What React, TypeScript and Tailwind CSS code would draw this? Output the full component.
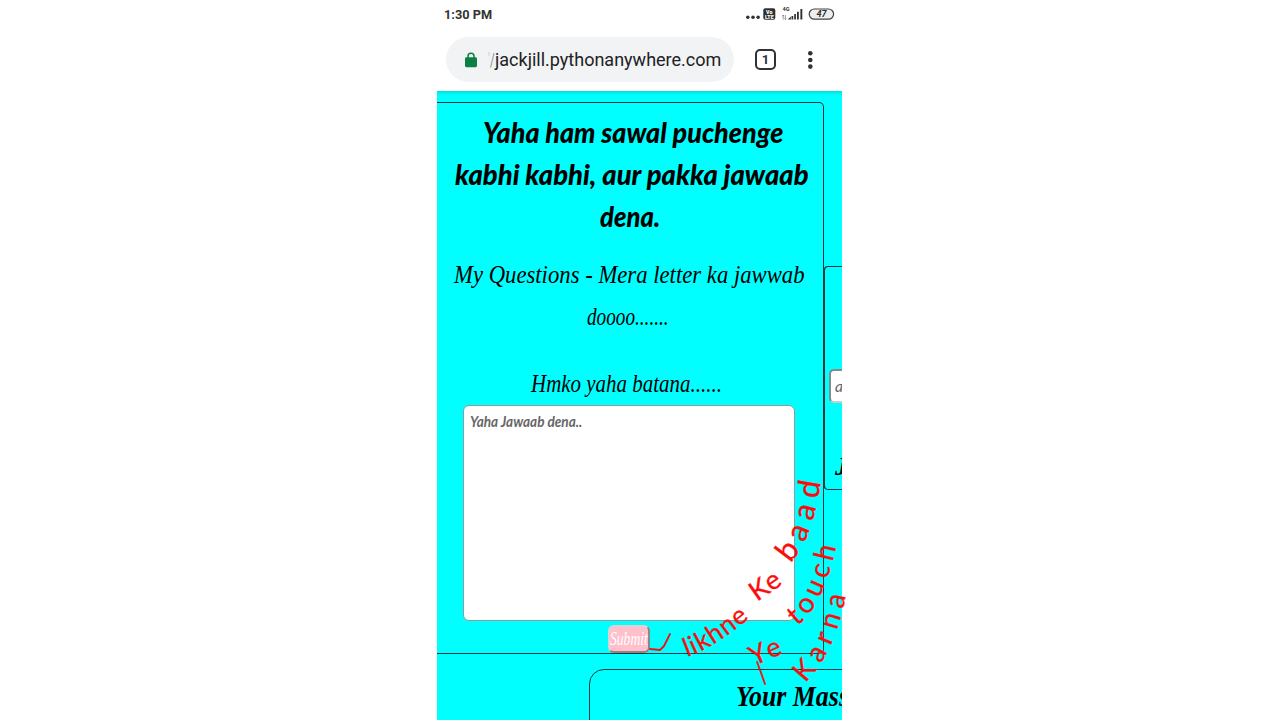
import { useLayoutEffect, useRef, type ReactNode } from "react";

/* A single line of text condensed or widened to a given width. */
function Line({ width, className = "", children }: { width: number; className?: string; children: ReactNode }) {
  const ref = useRef<HTMLSpanElement>(null);
  useLayoutEffect(() => {
    const el = ref.current;
    if (el) el.style.transform = `scaleX(${width / el.offsetWidth})`;
  }, [width]);
  return (
    <span className={`block shrink-0 ${className}`} style={{ width }}>
      <span ref={ref} className="inline-block origin-left whitespace-nowrap">
        {children}
      </span>
    </span>
  );
}

const brush = "font-['Lato','Liberation_Sans',sans-serif] font-black italic";
const script = "font-['Liberation_Serif',serif] italic";

function StatusBar() {
  return (
    <div className="flex h-[29px] items-start justify-between pr-[6px] pl-[7px] text-[#333]">
      <Line width={48} className="text-[13px] leading-[29px] font-bold">1:30 PM</Line>
      <svg width="90" height="18" viewBox="0 0 90 18" fill="#303030" className="mt-[5px]">
        <circle cx="1.8" cy="12.3" r="1.75" />
        <circle cx="7" cy="12.3" r="1.75" />
        <circle cx="12.1" cy="12.3" r="1.75" />
        <rect x="17.3" y="3.2" width="12" height="11.6" rx="2" />
        <text x="23.3" y="8.7" fill="#fff" fontSize="5.3" fontWeight="900" textAnchor="middle">Vo</text>
        <text x="23.3" y="13.6" fill="#fff" fontSize="5.3" fontWeight="900" textAnchor="middle">LTE</text>
        <text x="36.5" y="6" fontSize="5.6" fontWeight="700">4G</text>
        <path d="M37.2 10v4.5M36.4 11.2l.8-1.2.8 1.2M39.4 10v4.5M38.6 13.3l.8 1.2.8-1.2" stroke="#777" strokeWidth=".7" fill="none" />
        <path d="M41.8 14.6l3-3v3zM45.5 11h1.7v3.6h-1.7zM48.2 9h1.7v5.6h-1.7zM51 6.7h1.8v7.9H51zM54.4 4h1.9v10.6h-1.9z" />
        <rect x="63.2" y="4" width="24.4" height="10.2" rx="5.1" fill="#eee" stroke="#444" strokeWidth="1.2" />
        <text x="75.5" y="12.3" fontSize="9" fontWeight="700" fontStyle="italic" textAnchor="middle">47</text>
      </svg>
    </div>
  );
}

function AddressBar() {
  return (
    <div className="flex h-[62px] items-start pt-[8px] pl-[9px]">
      <div className="flex h-[45px] w-[288px] items-center rounded-full bg-[#f1f3f4] pl-[19px]">
        <svg width="12" height="16" viewBox="0 0 12 16" className="mr-[11px]">
          <path d="M3 7V4.2a3 3 0 0 1 6 0V7" fill="none" stroke="#0b8043" strokeWidth="1.5" />
          <rect x="0" y="5.2" width="12" height="10" rx="1.4" fill="#0b8043" />
        </svg>
        <span className="flex pt-px text-[18px] leading-[44px] text-[#202124]">
          <Line width={7} className="text-[#8b8d8f]"><span className="text-[#c8cacc]">'</span>/</Line>
          <Line width={226}>jackjill.pythonanywhere.com</Line>
        </span>
      </div>
      <div className="mt-[12px] ml-[21px] flex h-[21px] w-[21px] items-center justify-center rounded-[5px] border-2 border-[#2f3235] text-[13px] font-bold text-[#2f3235]">
        1
      </div>
      <svg width="6" height="20" viewBox="0 0 6 20" fill="#303336" className="mt-[13px] ml-[31px]">
        <circle cx="3.3" cy="3.2" r="2.3" />
        <circle cx="3.3" cy="10" r="2.3" />
        <circle cx="3.3" cy="16.6" r="2.3" />
      </svg>
    </div>
  );
}

function QuestionCard() {
  return (
    <section className="flex h-[552px] w-[387px] shrink-0 flex-col rounded-r-[5px] border border-l-0 border-[#12393b] text-black">
      <h1 className={`mt-[8px] text-[29px] leading-[42px] ${brush}`}>
        <Line width={300} className="ml-[46px]">Yaha ham sawal puchenge</Line>
        <Line width={354} className="ml-[18px]">kabhi kabhi, aur pakka jawaab</Line>
        <Line width={60} className="ml-[163px]">dena.</Line>
      </h1>
      <div className={`mt-[17px] text-[26px] leading-[42px] ${script}`}>
        <Line width={351} className="ml-[17px]">My Questions - Mera letter ka jawwab</Line>
        <Line width={82} className="ml-[150px]">doooo.......</Line>
        <Line width={191} className="mt-[25px] ml-[94px]">Hmko yaha batana......</Line>
      </div>
      <div className="ml-[26px] h-[216px] w-[332px] shrink-0 rounded-[6px] border border-[#8b9c9d] bg-white pt-[5px] pl-[6px] text-[15px] leading-[20px] text-[#666] italic">
        <Line width={112} className="font-['Lato',sans-serif] font-bold">Yaha Jawaab dena..</Line>
      </div>
      <button className={`mt-[4px] ml-[171px] h-[28px] w-[42px] shrink-0 rounded-[6px] border-2 border-t-[#e3cfd3] border-r-[#8d8588] border-b-[#8d8588] border-l-[#e3cfd3] bg-[#ffc0cb] text-left text-[19px] leading-[22px] text-white ${script}`}>
        <Line width={38}>Submit</Line>
      </button>
    </section>
  );
}

function SideCard() {
  return (
    <section className="mt-[164px] -ml-px flex h-[224px] w-[160px] shrink-0 flex-col rounded-[5px] border border-l-2 border-[#12393b]">
      <div className="mt-[102px] ml-[4px] h-[34px] w-[140px] rounded-[5px] border-2 border-[#858b8c] border-r-[#ccc] border-b-[#ccc] bg-white pl-[4px] text-[15px] leading-[30px] text-[#666] italic">
        <Line width={25} className="font-['Lato',sans-serif]">apn</Line>
      </div>
      <div className={`mt-[46px] ml-[10px] text-[25px] leading-[36px] font-bold text-black ${script}`}>J</div>
    </section>
  );
}

function Ink({ id, d, length, size, children }: { id: string; d: string; length: number; size: number; children: string }) {
  return (
    <>
      <path id={id} d={d} fill="none" stroke="none" />
      <text fontSize={size}>
        <textPath href={`#${id}`} textLength={length} lengthAdjust="spacing">
          {children}
        </textPath>
      </text>
    </>
  );
}

/* Red pen notes over the page, and the tick that points at the button. */
function Annotations() {
  return (
    <svg
      width="430"
      height="720"
      viewBox="437 0 430 720"
      className="pointer-events-none absolute top-0 left-0 font-['Lato','Liberation_Sans',sans-serif]"
      fill="#fb0d0d"
      stroke="#fb0d0d"
      strokeWidth=".3"
    >
      <path d="M650 649l10 1 4-4 6-12" fill="none" strokeWidth="1.8" strokeLinecap="round" strokeLinejoin="round" />
      <path d="M757 662l3 8 5 14" fill="none" strokeWidth="1.8" strokeLinecap="round" />
      <Ink id="n1" d="M687 657Q720 645 756 612" length={74} size={26}>likhne</Ink>
      <Ink id="n2" d="M757 602L786 582" length={32} size={27}>Ke</Ink>
      <Ink id="n3" d="M790 563Q814 540 822 472" length={88} size={31}>baad</Ink>
      <Ink id="n4" d="M754 666L786 652" length={32} size={27}>Ye</Ink>
      <Ink id="n5" d="M797 626Q825 605 838 538" length={90} size={28}>touch</Ink>
      <Ink id="n6" d="M805 683Q837 652 847 588" length={98} size={28}>Karna</Ink>
    </svg>
  );
}

export default function App() {
  return (
    <main className="flex h-[720px] w-[1280px] justify-start overflow-hidden bg-white pl-[437px] font-['Roboto','Liberation_Sans',sans-serif]">
      <div className="relative h-[720px] w-[405px] shrink-0">
        <div className="flex h-full flex-col overflow-hidden">
          <StatusBar />
          <AddressBar />
          <div className="flex min-h-0 flex-1 flex-col overflow-hidden bg-[#00ffff] pt-[11px] shadow-[inset_0_4px_3px_-2px_#00dede]">
            <div className="flex shrink-0">
              <QuestionCard />
              <SideCard />
            </div>
            <section className="mt-[15px] ml-[152px] h-[160px] w-[400px] shrink-0 rounded-[15px] border border-[#12393b] pt-[6px] pl-[146px]">
              <Line width={150} className={`text-[29px] leading-[40px] font-bold text-black ${script}`}>Your Massage</Line>
            </section>
          </div>
        </div>
        <Annotations />
      </div>
    </main>
  );
}
